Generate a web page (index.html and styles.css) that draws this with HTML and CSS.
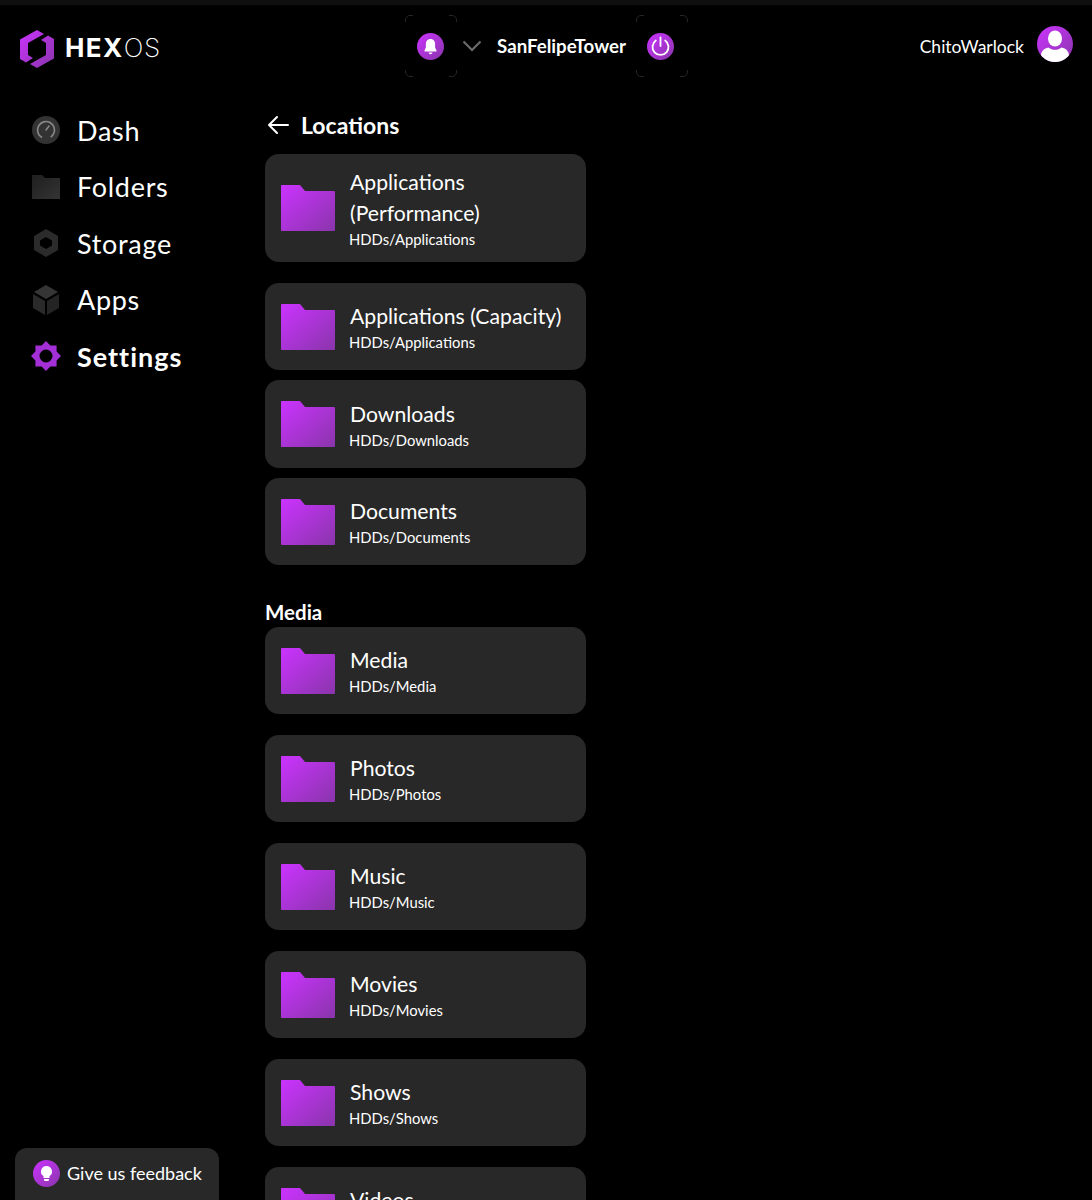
FILE: index.html

```html
<!DOCTYPE html>
<html lang="en">
<head>
  <meta charset="UTF-8">
  <meta name="viewport" content="width=device-width, initial-scale=1.0">
  <title>HexOS</title>
  <link rel="stylesheet" href="styles.css">
</head>
<body>
  <svg class="defs" width="0" height="0">
    <defs>
      <linearGradient id="purple" x1="0" y1="0" x2="1" y2="1">
        <stop offset="0" stop-color="#cb33ff"/>
        <stop offset="1" stop-color="#8a35ab"/>
      </linearGradient>
      <linearGradient id="dark" x1="0" y1="0" x2="1" y2="1">
        <stop offset="0" stop-color="#1f1f1f"/>
        <stop offset="1" stop-color="#343434"/>
      </linearGradient>
      <symbol id="folder" viewBox="0 0 54 46">
        <path fill="url(#purple)" d="M1 0h18l5 6h29a1 1 0 0 1 1 1v38a1 1 0 0 1-1 1H1a1 1 0 0 1-1-1V1a1 1 0 0 1 1-1z"/>
      </symbol>
      <symbol id="corners" viewBox="0 0 52 62">
        <path fill="none" stroke="#262626" d="M.5 7V5A4.500 4.500 0 0 1 5 .5h3M44 .5h3A4.500 4.500 0 0 1 51.500 5v2M51.500 55v2a4.500 4.500 0 0 1-4.500 4.500h-3M8 61.500H5A4.500 4.500 0 0 1 .5 57v-2"/>
      </symbol>
    </defs>
  </svg>

  <div class="topline"></div>

  <header class="header">
    <div class="brand">
      <svg class="brand-mark" width="34" height="38" viewBox="0 0 34 38">
        <path fill="url(#purple)" d="M17 0l7 4-16 9v12l5 3-7 4.500L0 29V9.500zM17 38l-7-4 16-9V13l-5-3 7-4.500L34 9v19.500z"/>
      </svg>
      <span class="brand-name"><b>HEX</b>OS</span>
    </div>

    <div class="server">
      <div class="icon-btn">
        <svg class="corners" width="52" height="62"><use href="#corners"/></svg>
        <svg class="bell" width="27" height="27" viewBox="0 0 27 27">
          <circle cx="13.500" cy="13.500" r="13.500" fill="url(#purple)"/>
          <path fill="#fff" d="M13.500 6c-3 0-4.600 2.300-4.600 5v3.500L7.500 17.500v1h12v-1l-1.400-3V11c0-2.700-1.600-5-4.600-5zM11.500 19.500h4c-.3 1.200-1 1.700-2 1.700s-1.700-.5-2-1.700z"/>
        </svg>
      </div>
      <svg class="chevron" width="20" height="12" viewBox="0 0 20 12">
        <path fill="none" stroke="#6b6b6b" stroke-width="2.200" d="M1.500 1.500L10 10l8.500-8.500"/>
      </svg>
      <span class="server-name">SanFelipeTower</span>
      <div class="icon-btn">
        <svg class="corners" width="52" height="62"><use href="#corners"/></svg>
        <svg class="power" width="27" height="27" viewBox="0 0 27 27">
          <circle cx="13.500" cy="13.500" r="13.500" fill="url(#purple)"/>
          <path fill="none" stroke="#fff" stroke-width="1.800" stroke-linecap="round" d="M13.500 4.500v8.500M8.800 7.500a8 8 0 1 0 9.400 0"/>
        </svg>
      </div>
    </div>

    <div class="user">
      <span class="user-name">ChitoWarlock</span>
      <svg width="36" height="36" viewBox="0 0 36 36">
        <clipPath id="avatar-clip"><circle cx="18" cy="18" r="18"/></clipPath>
        <circle cx="18" cy="18" r="18" fill="url(#purple)"/>
        <g clip-path="url(#avatar-clip)" fill="#fff">
          <ellipse cx="18" cy="12.500" rx="7" ry="8"/>
          <path d="M4 36v-6c0-5 3-7.500 7.500-8.500 2 1.500 4 2.300 6.500 2.300s4.500-.8 6.500-2.300C29 22.500 32 25 32 30v6z"/>
        </g>
      </svg>
    </div>
  </header>

  <div class="layout">
    <nav class="sidebar">
      <a class="nav-item">
        <svg width="28" height="28" viewBox="0 0 28 28">
          <circle cx="14" cy="14" r="14" fill="#333"/>
          <circle cx="14" cy="14" r="8.500" fill="none" stroke="#8a8a8a" stroke-width="1.600" stroke-dasharray="44 9.400" transform="rotate(118 14 14)"/>
          <path stroke="#8a8a8a" stroke-width="1.500" stroke-linecap="round" d="M14 14l3-4"/>
        </svg>
        Dash
      </a>
      <a class="nav-item">
        <svg width="28" height="24" viewBox="0 0 28 24">
          <path fill="url(#dark)" d="M0 0h10l3 3h15v21H0z"/>
        </svg>
        Folders
      </a>
      <a class="nav-item">
        <svg width="26" height="28" viewBox="0 0 26 28">
          <path fill="#2b2b2b" fill-rule="evenodd" d="M13 0l12 7v14l-12 7-12-7V7zM13 8l-6 3.500v5l6 3.500 6-3.500v-5z"/>
        </svg>
        Storage
      </a>
      <a class="nav-item">
        <svg width="26" height="30" viewBox="0 0 26 30">
          <path fill="#353535" d="M13 0l12 7-12 7L1 7z"/>
          <path fill="#2a2a2a" d="M0 9l12 7v14L0 23z"/>
          <path fill="#242424" d="M26 9l-12 7v14l12-7z"/>
        </svg>
        Apps
      </a>
      <a class="nav-item active">
        <svg width="30" height="30" viewBox="0 0 30 30">
          <path fill="#a32fd6" fill-rule="evenodd" d="M15 0l4.400 4.400 6.200-0 0 6.200L30 15l-4.400 4.400 0 6.200-6.200 0L15 30l-4.400-4.400-6.200 0 0-6.200L0 15l4.400-4.400 0-6.200 6.200 0zM15 8.500a6.500 6.500 0 1 0 0 13 6.500 6.500 0 0 0 0-13z"/>
        </svg>
        Settings
      </a>
    </nav>

    <main class="content">
      <h2 class="title">
        <svg width="22" height="20" viewBox="0 0 22 20">
          <path fill="none" stroke="#fff" stroke-width="2" stroke-linecap="round" stroke-linejoin="round" d="M21 10H2M10 2l-8 8 8 8"/>
        </svg>
        Locations
      </h2>

      <div class="card tall">
        <svg class="folder" width="54" height="46"><use href="#folder"/></svg>
        <div class="card-text">
          <div class="card-name">Applications (Performance)</div>
          <div class="card-path">HDDs/Applications</div>
        </div>
      </div>
      <div class="card wide-gap">
        <svg class="folder" width="54" height="46"><use href="#folder"/></svg>
        <div class="card-text">
          <div class="card-name">Applications (Capacity)</div>
          <div class="card-path">HDDs/Applications</div>
        </div>
      </div>
      <div class="card taller">
        <svg class="folder" width="54" height="46"><use href="#folder"/></svg>
        <div class="card-text">
          <div class="card-name">Downloads</div>
          <div class="card-path">HDDs/Downloads</div>
        </div>
      </div>
      <div class="card">
        <svg class="folder" width="54" height="46"><use href="#folder"/></svg>
        <div class="card-text">
          <div class="card-name">Documents</div>
          <div class="card-path">HDDs/Documents</div>
        </div>
      </div>

      <h3 class="section">Media</h3>

      <div class="card first">
        <svg class="folder" width="54" height="46"><use href="#folder"/></svg>
        <div class="card-text">
          <div class="card-name">Media</div>
          <div class="card-path">HDDs/Media</div>
        </div>
      </div>
      <div class="card wide-gap">
        <svg class="folder" width="54" height="46"><use href="#folder"/></svg>
        <div class="card-text">
          <div class="card-name">Photos</div>
          <div class="card-path">HDDs/Photos</div>
        </div>
      </div>
      <div class="card wide-gap">
        <svg class="folder" width="54" height="46"><use href="#folder"/></svg>
        <div class="card-text">
          <div class="card-name">Music</div>
          <div class="card-path">HDDs/Music</div>
        </div>
      </div>
      <div class="card wide-gap">
        <svg class="folder" width="54" height="46"><use href="#folder"/></svg>
        <div class="card-text">
          <div class="card-name">Movies</div>
          <div class="card-path">HDDs/Movies</div>
        </div>
      </div>
      <div class="card wide-gap">
        <svg class="folder" width="54" height="46"><use href="#folder"/></svg>
        <div class="card-text">
          <div class="card-name">Shows</div>
          <div class="card-path">HDDs/Shows</div>
        </div>
      </div>
      <div class="card wide-gap">
        <svg class="folder" width="54" height="46"><use href="#folder"/></svg>
        <div class="card-text">
          <div class="card-name">Videos</div>
          <div class="card-path">HDDs/Videos</div>
        </div>
      </div>
    </main>
  </div>

  <div class="feedback">
    <svg width="27" height="27" viewBox="0 0 27 27">
      <circle cx="13.500" cy="13.500" r="13.500" fill="url(#purple)"/>
      <path fill="#fff" d="M13.500 6a5.500 5.500 0 0 0-3 10.100V18h6v-1.900A5.500 5.500 0 0 0 13.500 6zM11 19h5v1a1 1 0 0 1-1 1h-3a1 1 0 0 1-1-1z"/>
    </svg>
    Give us feedback
  </div>
</body>
</html>
```

FILE: styles.css

```css
html, body {
  height: 1200px;
  overflow: hidden;
}
body {
  margin: 0;
  background: #000;
  color: #fff;
  font-family: "Lato", "Open Sans", sans-serif;
  position: relative;
}
.defs {
  position: absolute;
}
.topline {
  height: 5px;
  background: #0f0f0f;
}

/* header */
.header {
  display: grid;
  grid-template-columns: 1fr auto 1fr;
  align-items: center;
  height: 82px;
  padding: 0 19px 0 20px;
}
.brand {
  display: flex;
  align-items: center;
  gap: 11px;
  padding-top: 2px;
}
.brand-mark {
  margin-top: 4px;
}
.brand-name {
  font-family: "Inter", sans-serif;
  font-size: 26px;
  font-weight: 200;
  letter-spacing: .8px;
}
.brand-name b {
  font-weight: 700;
  letter-spacing: 1.400px;
}
.server {
  display: flex;
  align-items: center;
}
.icon-btn {
  position: relative;
  width: 52px;
  height: 62px;
  display: flex;
  align-items: center;
  justify-content: center;
}
.bell {
  margin-right: 1px;
}
.power {
  margin-right: 2px;
}
.corners {
  position: absolute;
  inset: 0;
}
.chevron {
  margin: 0 15px 0 5px;
}
.server-name {
  font-size: 18.700px;
  font-weight: 700;
  margin-right: 10px;
}
.user {
  display: flex;
  align-items: center;
  justify-content: flex-end;
  gap: 13px;
  padding-bottom: 4px;
}
.user-name {
  margin-top: 4px;
  font-size: 17.500px;
}

/* sidebar */
.layout {
  display: flex;
  align-items: flex-start;
}
.sidebar {
  width: 265px;
  flex: none;
  padding: 15px 0 0 32px;
  box-sizing: border-box;
  display: flex;
  flex-direction: column;
}
.nav-item {
  display: flex;
  align-items: center;
  height: 56.500px;
  font-size: 27px;
  letter-spacing: .7px;
}
.nav-item svg {
  width: 28px;
  margin-right: 17px;
}
.nav-item.active {
  font-weight: 700;
  letter-spacing: 1px;
}
.nav-item.active svg {
  width: 30px;
  margin: 0 16px 0 -1px;
}

/* locations */
.content {
  width: 321px;
  padding-top: 23px;
}
.title {
  display: flex;
  align-items: center;
  gap: 12px;
  margin: 0 0 14px 2px;
  font-size: 23px;
  line-height: 30px;
  font-weight: 700;
}
.section {
  margin: 35px 0 3px;
  font-size: 20.500px;
  line-height: 24px;
  font-weight: 700;
}
.card {
  display: flex;
  align-items: center;
  gap: 15px;
  height: 87px;
  margin-top: 10px;
  padding: 0 16px;
  background: #282828;
  border-radius: 14px;
}
.card.tall {
  height: 108px;
  margin-top: 0;
}
.card.taller {
  height: 88px;
}
.card.wide-gap {
  margin-top: 21px;
}
.card.first {
  margin-top: 0;
}
.folder {
  flex: none;
}
.card-name {
  font-size: 21.200px;
  line-height: 31px;
}
.card-path {
  margin-left: -1px;
  font-size: 14.800px;
  line-height: 20px;
}

/* feedback */
.feedback {
  position: absolute;
  left: 15px;
  bottom: 0;
  width: 204px;
  height: 52px;
  box-sizing: border-box;
  padding: 0 0 2px 18px;
  display: flex;
  align-items: center;
  gap: 7px;
  background: #282828;
  border-radius: 12px 12px 0 0;
  font-size: 18px;
}
```
